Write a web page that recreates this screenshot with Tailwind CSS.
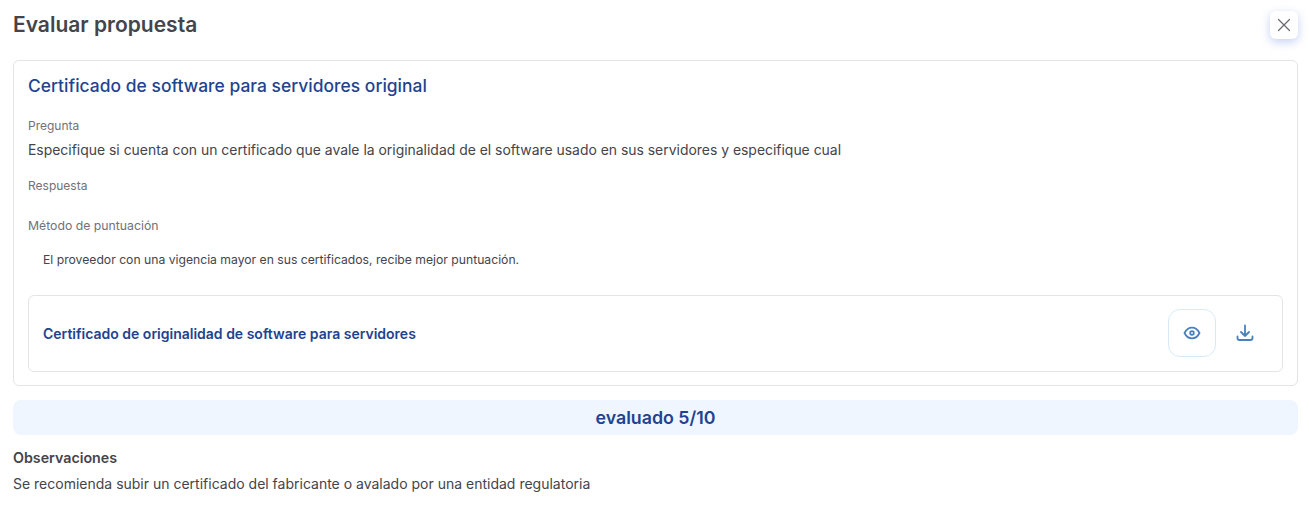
<!DOCTYPE html>
<html lang="en">
<head>
    <meta charset="UTF-8">
    <title>Evaluar propuesta</title>
    <script src="https://cdn.jsdelivr.net/npm/@tailwindcss/browser@4"></script>
</head>
<body class="bg-white font-['Inter',sans-serif] text-[#44444c] h-[507px] overflow-hidden">
    <div class="pl-[13px] pr-[11px] pt-[11px]">
        <!-- Header -->
        <div class="flex justify-between items-start h-[49px]">
            <h1 class="text-[21px] leading-[28px] font-semibold">Evaluar propuesta</h1>
            <button class="w-[28px] h-[28px] bg-white rounded-md shadow-[0_3px_10px_rgba(59,100,220,0.3)] flex items-center justify-center">
                <svg class="w-[14px] h-[14px]" viewBox="0 0 14 14" fill="none" stroke="#6b6b74" stroke-width="1.3" stroke-linecap="round"><path d="M1.5 1.5l11 11M12.5 1.5l-11 11"/></svg>
            </button>
        </div>

        <!-- Question card -->
        <div class="border border-[#e4e4e7] rounded-md px-[14px] pt-[13px] h-[326px]">
            <h2 class="text-[17.4px] leading-[24px] font-[450] tracking-[0.04px] text-[#1e4391]">Certificado de software para servidores original</h2>
            <div class="mt-[20px] text-[12px] leading-[16px] text-[#71717a]">Pregunta</div>
            <p class="mt-[6px] text-[13.93px] leading-[20px]">Especifique si cuenta con un certificado que avale la originalidad de el software usado en sus servidores y especifique cual</p>
            <div class="mt-[18px] text-[12px] leading-[16px] text-[#71717a]">Respuesta</div>
            <div class="mt-[24px] text-[12.25px] leading-[16px] text-[#71717a]">Método de puntuación</div>
            <p class="mt-[18px] pl-[15px] text-[12.18px] leading-[16px]">El proveedor con una vigencia mayor en sus certificados, recibe mejor puntuación.</p>

            <div class="mt-[27px] border border-[#e4e4e7] rounded-md h-[77px] pl-[14px] pr-[14px] flex items-center justify-between">
                <span class="text-[14px] leading-[20px] font-semibold text-[#1e4391]">Certificado de originalidad de software para servidores</span>
                <div class="flex items-center -mt-[1px]">
                    <button class="w-[48px] h-[48px] border border-[#d5ebfb] rounded-xl flex items-center justify-center">
                        <svg class="w-[18px] h-[18px]" viewBox="0 0 18 18" fill="none" stroke="#4a80bb" stroke-width="1.8" stroke-linecap="round" stroke-linejoin="round"><path d="M1.5 9S4.2 3.6 9 3.6 16.500 9 16.500 9 13.800 14.400 9 14.400 1.500 9 1.500 9z"/><circle cx="9" cy="9" r="1.800"/></svg>
                    </button>
                    <button class="w-[48px] h-[48px] ml-[5px] -mr-[1px] flex items-center justify-center">
                        <svg class="w-[18px] h-[18px]" viewBox="0 0 18 18" fill="none" stroke="#4a80bb" stroke-width="1.8" stroke-linecap="round" stroke-linejoin="round"><path d="M9 1.500v10.500M5 8l4 4 4-4M1.500 12.500V14a2 2 0 0 0 2 2h11a2 2 0 0 0 2-2v-1.500"/></svg>
                    </button>
                </div>
            </div>
        </div>

        <!-- Score -->
        <div class="mt-[14px] h-[35px] bg-[#eff6ff] rounded-lg flex items-center justify-center text-[17.8px] leading-[36px] font-semibold text-[#1e4391]">evaluado 5/10</div>

        <!-- Notes -->
        <div class="mt-[13px] text-[14.25px] leading-[20px] font-semibold">Observaciones</div>
        <p class="mt-[6px] text-[14px] leading-[20px]">Se recomienda subir un certificado del fabricante o avalado por una entidad regulatoria</p>
    </div>
</body>
</html>
